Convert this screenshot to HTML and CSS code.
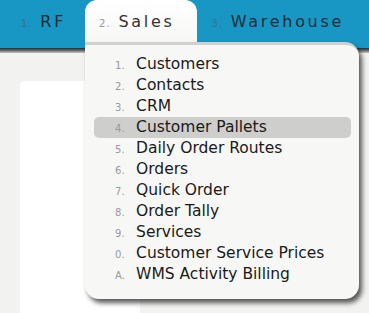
FILE: index.html
```html
<!DOCTYPE html>
<html>
<head>
  <meta charset="UTF-8">
  <title>Sales</title>
  <link rel="stylesheet" href="styles.css">
</head>
<body>
  <div class="topbar">
    <div class="tab"><span class="num">1.</span> RF</div>
    <div class="tab open">
      <span class="num">2.</span> Sales
      <ul class="menu">
        <li><span class="num">1.</span>Customers</li>
        <li><span class="num">2.</span>Contacts</li>
        <li><span class="num">3.</span>CRM</li>
        <li class="hover"><span class="num">4.</span>Customer Pallets</li>
        <li><span class="num">5.</span>Daily Order Routes</li>
        <li><span class="num">6.</span>Orders</li>
        <li><span class="num">7.</span>Quick Order</li>
        <li><span class="num">8.</span>Order Tally</li>
        <li><span class="num">9.</span>Services</li>
        <li><span class="num">0.</span>Customer Service Prices</li>
        <li><span class="num">A.</span>WMS Activity Billing</li>
      </ul>
    </div>
    <div class="tab"><span class="num">3.</span> Warehouse</div>
  </div>
  <div class="band"></div>
  <div class="content">
    <div class="card"></div>
  </div>
</body>
</html>
```

FILE: styles.css
```css
body {
  margin: 0;
  height: 313px;
  overflow: hidden;
  background-color: #f2f2f1;
  font-family: "DejaVu Sans", Verdana, sans-serif;
  display: flex;
  flex-direction: column;
}
.topbar {
  display: flex;
  height: 48px;
  padding-left: 7px;
  background-color: #1897c5;
}
.tab {
  position: relative;
  height: 42px;
  line-height: 44px;
  padding: 0 19px 0 14px;
  font-size: 16px;
  letter-spacing: 2.7px;
  color: #1f2d36;
}
.tab .num {
  font-size: 10px;
  letter-spacing: 1px;
  color: #3d6f86;
}
.tab.open {
  background: linear-gradient(#ffffff, #f7f7f6);
  border-radius: 12px 12px 0 0;
  color: #333;
  padding-right: 23px;
}
.tab.open .num {
  color: #999;
}
.menu {
  position: absolute;
  top: 42px;
  left: 0;
  width: 257px;
  margin: 0;
  padding: 9px 8px 14px 9px;
  list-style: none;
  background-color: #f7f7f6;
  border-top: 3px solid #d0d0ce;
  border-radius: 0 14px 14px 14px;
  box-shadow: 3px 4px 5px rgba(0, 0, 0, 0.65);
  letter-spacing: 0;
  z-index: 2;
}
.menu li {
  height: 21px;
  line-height: 20px;
  padding-left: 21px;
  font-size: 15.5px;
  color: #1a1a1a;
  border-radius: 5px;
  white-space: nowrap;
}
.menu li .num {
  display: inline-block;
  width: 21px;
  font-size: 10px;
  letter-spacing: 0;
  color: #888;
}
.menu li.hover {
  background-color: #cececc;
}
.band {
  height: 5px;
  background: linear-gradient(#2a2a2a, #6a6a6a 50%, #c8c8c8);
}
.content {
  flex: 1;
  padding: 28px 0 0 20px;
}
.card {
  width: 120px;
  height: 100%;
  background-color: #ffffff;
  border-radius: 5px 5px 0 0;
}
```
